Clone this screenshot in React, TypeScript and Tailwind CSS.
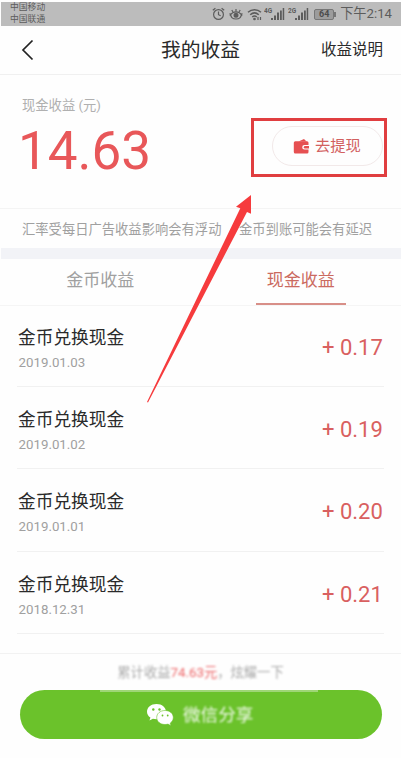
import React from 'react';

const records = [
  { date: '2019.01.03', amount: '+ 0.17' },
  { date: '2019.01.02', amount: '+ 0.19' },
  { date: '2019.01.01', amount: '+ 0.20' },
  { date: '2018.12.31', amount: '+ 0.21' },
];

function Signal({ label }: { label: string }) {
  return (
    <svg width="21" height="15" viewBox="0 0 21 15" fill="#5c5c5c">
      <text x="0" y="6" fontSize="6.5" fontWeight="700" fontFamily="Roboto, sans-serif">{label}</text>
      <rect x="7" y="11" width="2" height="2" />
      <rect x="10" y="8.500" width="2" height="4.500" />
      <rect x="13" y="5.500" width="2" height="7.500" />
      <rect x="16" y="3.500" width="1.800" height="9.500" />
      <rect x="18.700" y="1" width="1.500" height="12" />
    </svg>
  );
}

function StatusBar() {
  return (
    <div className="ml-px mt-[2px] flex h-6 shrink-0 items-center justify-between bg-[#bcbcbc] pl-[9px] pr-[9px] text-[#5c5c5c]">
      <div className="-mt-[2px] text-[8.8px] leading-[12px]">
        <div>中国移动</div>
        <div>中国联通</div>
      </div>
      <div className="flex items-center">
        <svg width="13" height="14" viewBox="0 0 13 14" fill="none" stroke="#5c5c5c" strokeWidth="1.2">
          <circle cx="6.500" cy="7.500" r="4.900" />
          <path d="M6.500 4.500v3.200l2.200 1M.8 3.300 3.400 1.200M12.200 3.300 9.600 1.200" />
        </svg>
        <svg className="ml-1" width="14" height="14" viewBox="0 0 14 14" fill="none" stroke="#5c5c5c" strokeWidth="1.200">
          <path d="M.8 6.200C2.400 9.200 1.800 12 7 12s4.600-2.800 6.200-5.800" />
          <path d="M.8 8.500C3 5.500 5 4.800 7 4.800s4 .7 6.200 3.700" />
          <circle cx="7" cy="8.300" r="1.900" fill="#5c5c5c" />
          <path d="M7 4.500V2M4 5 2.800 3M10 5 11.200 3" />
        </svg>
        <svg className="ml-1" width="15" height="14" viewBox="0 0 15 14" fill="none" stroke="#5c5c5c" strokeWidth="1.500">
          <path d="M1 5.200C4.800 1.800 10.200 1.800 14 5.200M3.200 7.700c2.600-2.200 6-2.200 8.600 0M5.200 10c1.400-1.200 3.200-1.200 4.600 0" />
          <circle cx="7.500" cy="12" r=".6" fill="#5c5c5c" />
          <path d="M11 10v3M13.500 10v3" strokeWidth="1.200" />
        </svg>
        <span className="ml-[2px]"><Signal label="4G" /></span>
        <span className="ml-[3px]"><Signal label="2G" /></span>
        <div className="ml-[5px] flex items-center">
          <div className="flex h-[11px] w-[20px] items-center justify-center rounded-[2px] border border-[#777] bg-[#9c9c9c] text-[9px] font-bold leading-none text-[#4c4c4c]">64</div>
          <div className="h-[5px] w-[2px] bg-[#777]" />
        </div>
        <span className="ml-[4px] whitespace-nowrap text-[13.200px] leading-6">下午2:14</span>
      </div>
    </div>
  );
}

function ShareFooter() {
  return (
    <footer className="mt-[19px] border-t border-[#f2f2f2]">
      <p className="flex h-9 items-center justify-center whitespace-nowrap pt-px text-[13.300px] text-[#aaa] blur-[1px]">
        累计收益<span className="text-[#ee6668]">74.63元</span>，炫耀一下
      </p>
      <button className="relative ml-5 flex h-[49px] w-[362px] items-center rounded-full bg-[#6bc22b] pl-[126px] text-white">
        <span className="absolute left-[80px] top-0 h-[2px] w-[218px] bg-[#9fd676]" />
        <svg className="blur-[0.5px]" width="28" height="24" viewBox="0 0 28 24">
          <path fill="#fff" d="M10.500 1C5 1 1 4.400 1 8.700c0 2.500 1.300 4.500 3.400 5.900l-.9 2.800 3.400-1.700c1.200.3 2.400.5 3.600.5C16 16.200 20 12.900 20 8.700S16 1 10.500 1Z" />
          <path fill="#fff" stroke="#6bc22b" strokeWidth=".6" d="M19 7.500c-4.800 0-8.300 3.100-8.300 7s3.500 7 8.300 7c1 0 2-.2 3-.4l3 1.700-.8-2.600c1.800-1.300 3.100-3.200 3.100-5.700 0-3.900-3.500-7-8.300-7Z" />
          <g fill="#6bc22b"><circle cx="7.300" cy="6.500" r="1.200" /><circle cx="13.500" cy="6.500" r="1.200" /><circle cx="16.500" cy="12.500" r=".9" /><circle cx="21.700" cy="12.500" r=".9" /></g>
        </svg>
        <span className="ml-[9px] mt-[2px] text-[17.600px] opacity-90 blur-[1px]">微信分享</span>
      </button>
    </footer>
  );
}

export default function App() {
  return (
    <div className="relative flex h-[758px] w-[401px] flex-col overflow-hidden bg-[#fefefe] font-['Roboto','Noto_Sans_CJK_SC',sans-serif]">
      <StatusBar />

      <header className="flex h-[49px] items-center border-b border-[#f0f0f0] text-[#2a2a2a]">
        <svg className="ml-[21px]" width="13" height="22" viewBox="0 0 13 22" fill="none" stroke="#222" strokeWidth="1.700">
          <path d="M11.500 1.500 2 11l9.500 9.500" />
        </svg>
        <h1 className="ml-[127px] mt-[2px] text-[19.800px]">我的收益</h1>
        <span className="ml-auto mr-[18px] mt-[2px] text-[15.500px]">收益说明</span>
      </header>

      <section className="flex h-[134px] justify-between border-b border-[#f4f4f4] pl-[22px] pr-[18px]">
        <div>
          <div className="mt-[21px] text-[13.300px] leading-5 text-[#b0b0b0]">现金收益 (元)</div>
          <div className="-ml-[4px] mt-[5px] text-[53px] leading-[60px] text-[#e85759]">14.63</div>
        </div>
        <button className="mt-[51px] flex h-10 w-[111px] items-center rounded-full border-[1.500px] border-[#f2e9e9] pl-5 text-[#d2605f]">
          <svg width="17" height="17" viewBox="0 0 17 17" fill="#e65052">
            <path d="m5.500 3.500 5.500-2.600 2.500 2.600Z" />
            <path d="M2.300 3.300H14A1.500 1.500 0 0 1 15.500 4.800V7h-4a2.300 2.300 0 0 0 0 4.600h4V14a1.500 1.500 0 0 1-1.500 1.500H2.300A1.500 1.500 0 0 1 .8 14V4.800a1.500 1.500 0 0 1 1.500-1.500Z" />
            <path d="M12 8.100h4v2.400h-4a1.200 1.200 0 0 1 0-2.400Z" />
          </svg>
          <span className="ml-[5px] text-[15.300px]">去提现</span>
        </button>
      </section>

      <div className="flex h-[39px] items-center justify-between whitespace-nowrap pl-[22px] pr-[29px] pt-[2px] text-[13.300px] text-[#a0a0a0]">
        <span>汇率受每日广告收益影响会有浮动</span>
        <span>金币到账可能会有延迟</span>
      </div>
      <div className="ml-px h-[11px] bg-[#f2f3f7]" />

      <nav className="grid h-[47px] grid-cols-2 border-b border-[#f5f5f5] text-[17px]">
        <div className="pt-[9px] text-center text-[#a0a0a0]">金币收益</div>
        <div className="mx-auto h-[46px] w-[90px] border-b-2 border-[#d88f88] pt-[9px] text-center text-[#cb6a5f]">现金收益</div>
      </nav>

      <main className="ml-[17px] mr-[17px]">
        {records.map((record, i) => (
          <div key={record.date} className={`flex justify-between border-b border-[#f1f1f1] ${i % 2 ? 'h-[82px]' : i === 0 ? 'h-[81px]' : 'h-[83px]'}`}>
            <div className="pl-px">
              <div className={`${i === 0 ? 'mt-[19px]' : 'mt-[20px]'} text-[17.700px] leading-[26px] text-[#2a2a2a]`}>金币兑换现金</div>
              <div className="ml-[0.500px] mt-[3px] text-[13.300px] leading-[18px] text-[#a0a0a0]">{record.date}</div>
            </div>
            <div className={`w-[62px] whitespace-nowrap ${i === 0 ? 'pt-[26px]' : 'pt-[27px]'} text-[22px] leading-[32px] text-[#d96060]`}>{record.amount}</div>
          </div>
        ))}
      </main>

      <ShareFooter />

      <div className="pointer-events-none absolute left-[251px] top-[118px] h-[59px] w-[136px] border-[3px] border-[#e03e40]" />
      <svg className="pointer-events-none absolute left-0 top-0" width="401" height="758" viewBox="0 0 401 758">
        <path d="m251 195-15 11.700 4.300 1.500L147 402l1 .5L247 212l4 1.700Z" fill="#f63b3d" />
      </svg>
    </div>
  );
}
